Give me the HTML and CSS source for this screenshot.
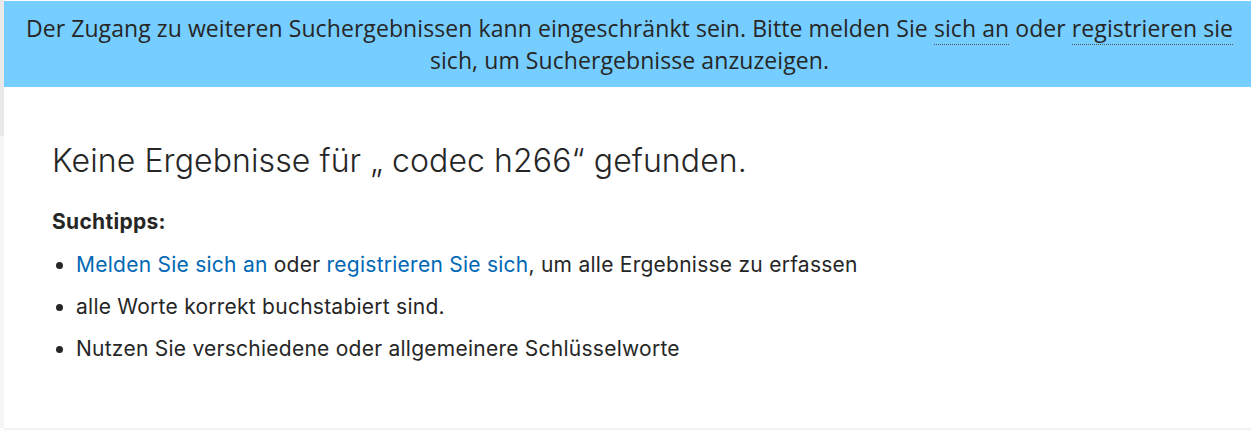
FILE: index.html
```html
<!DOCTYPE html>
<html lang="de">
<head>
<meta charset="utf-8">
<title>Suche</title>
<link rel="stylesheet" href="styles.css">
</head>
<body>
<div class="page">
  <div class="rail"><div class="rail-top"></div></div>
  <div class="main">
    <div class="banner">
      Der Zugang zu weiteren Suchergebnissen kann eingeschränkt sein. Bitte melden Sie <a class="blink" href="#">sich an</a> oder <a class="blink" href="#">registrieren sie</a> sich, um Suchergebnisse anzuzeigen.
    </div>
    <div class="content">
      <h1 class="title">Keine Ergebnisse für „ codec h266“ gefunden.</h1>
      <h2 class="tips">Suchtipps:</h2>
      <ul class="list">
        <li><a class="link" href="#">Melden Sie sich an</a> oder <a class="link" href="#">registrieren Sie sich</a>, um alle Ergebnisse zu erfassen</li>
        <li>alle Worte korrekt buchstabiert sind.</li>
        <li>Nutzen Sie verschiedene oder allgemeinere Schlüsselworte</li>
      </ul>
    </div>
  </div>
</div>
</body>
</html>
```
FILE: styles.css
```css
html, body {
  margin: 0;
  padding: 0;
  background: #ffffff;
}
.page {
  display: flex;
  height: 430px;
}
.rail {
  width: 4px;
  flex: none;
  background: #f6f6f6;
  height: 428px;
}
.rail-top {
  height: 136px;
  background: #e9e9e9;
}
.main {
  flex: 1;
  display: flex;
  flex-direction: column;
  height: 428px;
  border-bottom: 2px solid #f2f2f2;
}
.banner {
  margin-top: 1px;
  background: #76cdff;
  color: #262626;
  font-family: "Open Sans", sans-serif;
  font-size: 23px;
  letter-spacing: 0.08px;
  line-height: 32px;
  text-align: center;
  padding: 11px 12px 11px 16px;
}
.blink {
  color: #262626;
  text-decoration: none;
  border-bottom: 1px dotted #555;
}
.content {
  padding: 0 0 0 48px;
  font-family: "Inter", sans-serif;
  color: #262626;
}
.title {
  margin: 52px 0 0 0;
  font-size: 32px;
  font-weight: 300;
  letter-spacing: 0.1px;
  line-height: 44px;
}
.tips {
  margin: 25px 0 0 0;
  font-size: 21px;
  font-weight: 700;
  letter-spacing: 0.3px;
  line-height: 28px;
}
.list {
  margin: 15px 0 0 0;
  padding-left: 24px;
  font-size: 21px;
  letter-spacing: 0.25px;
  line-height: 28px;
}
.list li {
  margin-bottom: 14px;
}
.link {
  color: #0068b5;
  text-decoration: none;
}
```
